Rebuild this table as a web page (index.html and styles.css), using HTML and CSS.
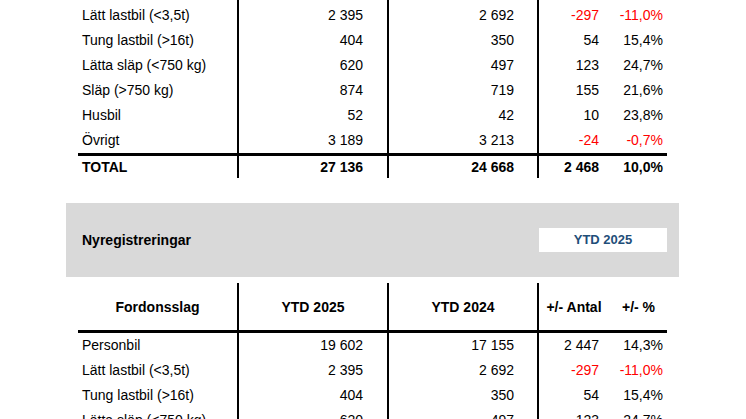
FILE: index.html
```html
<!DOCTYPE html>
<html lang="sv">
<head>
<meta charset="utf-8">
<title>Nyregistreringar</title>
<link rel="stylesheet" href="styles.css">
</head>
<body>
<div class="page">
  <table class="data data-top">
    <colgroup>
      <col class="c-name"><col class="c-num"><col class="c-num"><col class="c-diff"><col class="c-pct">
    </colgroup>
    <tbody>
      <tr class="first"><td class="name">Lätt lastbil (&lt;3,5t)</td><td class="n1">2 395</td><td class="n2">2 692</td><td class="d neg">-297</td><td class="p neg">-11,0%</td></tr>
      <tr><td class="name">Tung lastbil (&gt;16t)</td><td class="n1">404</td><td class="n2">350</td><td class="d">54</td><td class="p">15,4%</td></tr>
      <tr><td class="name">Lätta släp (&lt;750 kg)</td><td class="n1">620</td><td class="n2">497</td><td class="d">123</td><td class="p">24,7%</td></tr>
      <tr><td class="name">Släp (&gt;750 kg)</td><td class="n1">874</td><td class="n2">719</td><td class="d">155</td><td class="p">21,6%</td></tr>
      <tr><td class="name">Husbil</td><td class="n1">52</td><td class="n2">42</td><td class="d">10</td><td class="p">23,8%</td></tr>
      <tr><td class="name">Övrigt</td><td class="n1">3 189</td><td class="n2">3 213</td><td class="d neg">-24</td><td class="p neg">-0,7%</td></tr>
      <tr class="total"><td class="name">TOTAL</td><td class="n1">27 136</td><td class="n2">24 668</td><td class="d">2 468</td><td class="p">10,0%</td></tr>
    </tbody>
  </table>

  <div class="band">
    <span class="band-title">Nyregistreringar</span>
    <span class="period">YTD 2025</span>
  </div>

  <table class="data data-ytd">
    <colgroup>
      <col class="c-name"><col class="c-num"><col class="c-num"><col class="c-diff"><col class="c-pct">
    </colgroup>
    <thead>
      <tr><th class="h-name">Fordonsslag</th><th class="h-num h-rule">YTD 2025</th><th class="h-num h-rule">YTD 2024</th><th class="h-diff h-rule">+/- Antal</th><th class="h-pct">+/- %</th></tr>
    </thead>
    <tbody>
      <tr><td class="name">Personbil</td><td class="n1">19 602</td><td class="n2">17 155</td><td class="d">2 447</td><td class="p">14,3%</td></tr>
      <tr><td class="name">Lätt lastbil (&lt;3,5t)</td><td class="n1">2 395</td><td class="n2">2 692</td><td class="d neg">-297</td><td class="p neg">-11,0%</td></tr>
      <tr><td class="name">Tung lastbil (&gt;16t)</td><td class="n1">404</td><td class="n2">350</td><td class="d">54</td><td class="p">15,4%</td></tr>
      <tr><td class="name">Lätta släp (&lt;750 kg)</td><td class="n1">620</td><td class="n2">497</td><td class="d">123</td><td class="p">24,7%</td></tr>
    </tbody>
  </table>
</div>
</body>
</html>
```
FILE: styles.css
```css
html, body {
  margin: 0;
  padding: 0;
  background: #ffffff;
}

body {
  font-family: "Liberation Sans", Arial, sans-serif;
  color: #000000;
}

.page {
  width: 613px;
  height: 100vh;
  overflow: hidden;
  margin-left: 66px;
}

.data {
  table-layout: fixed;
  border-collapse: separate;
  border-spacing: 0;
  width: 589px;
  margin: 0 12px;
  font-size: 14px;
}

.c-name { width: 159px; }
.c-num { width: 150px; }
.c-diff { width: 69px; }
.c-pct { width: 61px; }

.data td,
.data th {
  padding: 0;
  height: 25px;
  line-height: 25px;
  white-space: nowrap;
  box-sizing: border-box;
}

.data .name {
  text-align: left;
  padding-left: 4px;
}

.data .n1 {
  text-align: right;
  padding-right: 24px;
  border-left: 2px solid #000000;
}

.data .n2 {
  text-align: right;
  padding-right: 23px;
  border-left: 2px solid #000000;
}

.data .d {
  text-align: right;
  padding-right: 7px;
  border-left: 2px solid #000000;
}

.data .p {
  text-align: right;
  padding-right: 4px;
}

.neg {
  color: #ff0000;
}

.data-top .first td {
  height: 28px;
  padding-top: 3px;
}

.data .total td {
  font-weight: bold;
  height: 25px;
  line-height: 22px;
  border-top: 3px solid #000000;
}

.band {
  margin-top: 25px;
  height: 74px;
  background: #d9d9d9;
  display: flex;
  align-items: center;
  justify-content: space-between;
  padding: 0 12px 0 16px;
  box-sizing: border-box;
}

.band-title {
  font-size: 14px;
  font-weight: bold;
}

.period {
  width: 128px;
  height: 24px;
  background: #ffffff;
  color: #1f4e79;
  font-size: 13px;
  font-weight: bold;
  line-height: 24px;
  text-align: center;
}

.data-ytd {
  margin-top: 6px;
}

.data-ytd thead th {
  height: 50px;
  padding-top: 2px;
  line-height: 45px;
  font-weight: bold;
  text-align: center;
  border-bottom: 3px solid #000000;
}

.data-ytd thead th.h-rule {
  border-left: 2px solid #000000;
}

.data-ytd thead th.h-diff {
  padding-left: 3px;
}

.data-ytd thead th.h-pct {
  padding-left: 4px;
}
```
